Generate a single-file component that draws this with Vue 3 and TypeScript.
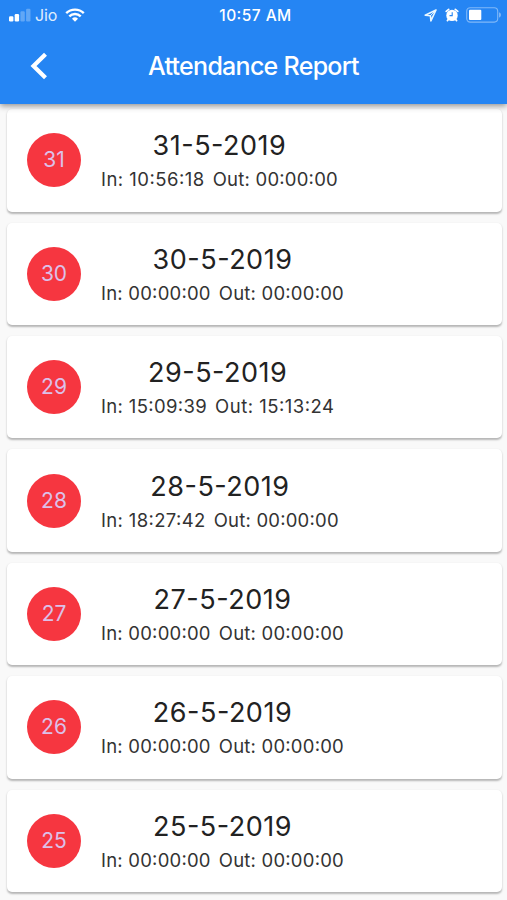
<script setup lang="ts">
interface Entry {
  day: number
  timeIn: string
  timeOut: string
}

const entries: Entry[] = [
  { day: 31, timeIn: '10:56:18', timeOut: '00:00:00' },
  { day: 30, timeIn: '00:00:00', timeOut: '00:00:00' },
  { day: 29, timeIn: '15:09:39', timeOut: '15:13:24' },
  { day: 28, timeIn: '18:27:42', timeOut: '00:00:00' },
  { day: 27, timeIn: '00:00:00', timeOut: '00:00:00' },
  { day: 26, timeIn: '00:00:00', timeOut: '00:00:00' },
  { day: 25, timeIn: '00:00:00', timeOut: '00:00:00' },
]

// The digit 1 is narrow, so times that contain it get slightly wider tracking.
function tracking(time: string): { letterSpacing: string } {
  const ones = time.split('1').length - 1
  return { letterSpacing: `${0.22 + ones * 0.13}px` }
}
</script>

<template>
  <div class="screen">
    <header class="header">
      <div class="status">
        <div class="status-left">
          <svg class="signal" width="22" height="14" viewBox="0 0 22 14" fill="#fff">
            <rect x="0" y="8.3" width="4.4" height="5.2" rx="1.2" />
            <rect x="5.7" y="6" width="4.4" height="7.5" rx="1.2" />
            <rect x="11.4" y="3.3" width="4.4" height="10.2" rx="1.2" opacity=".28" />
            <rect x="17.1" y="0.8" width="4.4" height="12.7" rx="1.2" opacity=".28" />
          </svg>
          <span class="carrier">Jio</span>
          <svg class="wifi" width="20" height="14" viewBox="0 0 20 14" fill="none" stroke="#fff" stroke-width="2.4">
            <path d="M1.2 5.2a12.6 12.6 0 0 1 17.6 0" />
            <path d="M4.3 8.4a8.1 8.1 0 0 1 11.4 0" />
            <path d="M10 13.8 7 10.8a4.3 4.3 0 0 1 6 0Z" fill="#fff" stroke="none" />
          </svg>
        </div>
        <span class="clock">10:57 AM</span>
        <div class="status-right">
          <svg width="13" height="13" viewBox="0 0 13 13" fill="none" stroke="#e9f7ff" stroke-width="1.6" stroke-linejoin="round">
            <path d="M12 1 1.2 6.2l5.2.5.5 5.2Z" />
            <path d="M12 1 6.4 6.7" stroke-width="1" />
          </svg>
          <svg class="alarm" width="14" height="14" viewBox="0 0 14 14">
            <circle cx="7" cy="7.4" r="5.7" fill="#fff" />
            <path d="M1.2 3.4 3.7 1.3M12.8 3.4l-2.5-2.1M3.2 11.6l-.8 1M10.8 11.6l.8 1" stroke="#fff" stroke-width="1.7" stroke-linecap="round" />
            <path d="M7.2 4.2v3.4H4.5" stroke="#2585f3" stroke-width="1.1" fill="none" />
          </svg>
          <svg class="battery" width="36" height="16" viewBox="0 0 36 16">
            <rect x=".7" y=".7" width="31" height="14.4" rx="3.5" fill="none" stroke="#fff" stroke-opacity=".42" stroke-width="1.1" />
            <rect x="3" y="2.7" width="12.3" height="10.4" rx="1" fill="#fff" />
            <path d="M33.2 5.2c2.1.8 2.1 4.6 0 5.4Z" fill="#fff" opacity=".5" />
          </svg>
        </div>
      </div>
      <div class="toolbar">
        <svg class="back" width="18" height="28" viewBox="0 0 18 28" fill="none" stroke="#fff" stroke-width="4.2">
          <path d="M15.5 2.2 3.5 14l12 11.8" />
        </svg>
        <h1 class="title">Attendance Report</h1>
      </div>
    </header>
    <main class="list">
      <article v-for="entry in entries" :key="entry.day" class="card">
        <div class="badge">{{ entry.day }}</div>
        <div class="info">
          <div class="date">{{ entry.day }}-5-2019</div>
          <div class="times">
            <span :style="tracking(entry.timeIn)">In: {{ entry.timeIn }}</span>
            <span :style="tracking(entry.timeOut)">Out: {{ entry.timeOut }}</span>
          </div>
        </div>
      </article>
    </main>
  </div>
</template>

<style>
body {
  margin: 0;
  background: #f9f9f9;
}
</style>

<style scoped>
.screen {
  height: 900px;
  overflow: hidden;
  display: flex;
  flex-direction: column;
  background: #f9f9f9;
  font-family: Inter, "Liberation Sans", sans-serif;
  font-feature-settings: "calt" 1;
}
.header {
  position: relative;
  z-index: 1;
  flex: none;
  box-sizing: border-box;
  height: 104px;
  background: #2585f3;
  color: #fff;
  box-shadow: 0 2px 6px rgba(0, 0, 0, 0.42);
}
.status {
  display: grid;
  grid-template-columns: 1fr auto 1fr;
  align-items: center;
  height: 30px;
  padding: 0 5px 0 9px;
}
.status-left,
.status-right {
  display: flex;
  align-items: center;
}
.status-right {
  justify-content: flex-end;
}
.carrier {
  margin-left: 4px;
  font-size: 16px;
  letter-spacing: -0.1px;
  opacity: 0.85;
}
.wifi {
  margin-left: 8px;
}
.clock {
  font-size: 15.5px;
  font-weight: 500;
  letter-spacing: 0.45px;
}
.alarm {
  margin-left: 8px;
}
.battery {
  margin-left: 7px;
}
.toolbar {
  display: flex;
  align-items: center;
  height: 72px;
  padding-left: 30px;
}
.title {
  margin: 0 0 0 100px;
  font-size: 25px;
  font-weight: 500;
  letter-spacing: -0.72px;
  white-space: nowrap;
}
.list {
  display: flex;
  flex-direction: column;
  gap: 11px;
  padding: 5.3px 5px 0 7px;
}
.card {
  box-sizing: border-box;
  flex: none;
  height: 102.4px;
  display: flex;
  align-items: center;
  padding-left: 20px;
  border-radius: 5px;
  background: #fff;
  box-shadow: 0 1.5px 2px rgba(0, 0, 0, 0.27);
}
.badge {
  flex: none;
  width: 54px;
  height: 54px;
  border-radius: 50%;
  background: #f63640;
  color: #dcc0e8;
  font-size: 21px;
  line-height: 54px;
  text-align: center;
}
.info {
  margin-left: 20px;
  padding-top: 3px;
  display: flex;
  flex-direction: column;
  align-items: center;
  color: #222;
}
.date {
  font-size: 27px;
  line-height: 35px;
  letter-spacing: 0.5px;
}
.times {
  display: flex;
  gap: 8px;
  font-size: 18.5px;
  line-height: 32px;
  color: #333;
  white-space: nowrap;
}
</style>
